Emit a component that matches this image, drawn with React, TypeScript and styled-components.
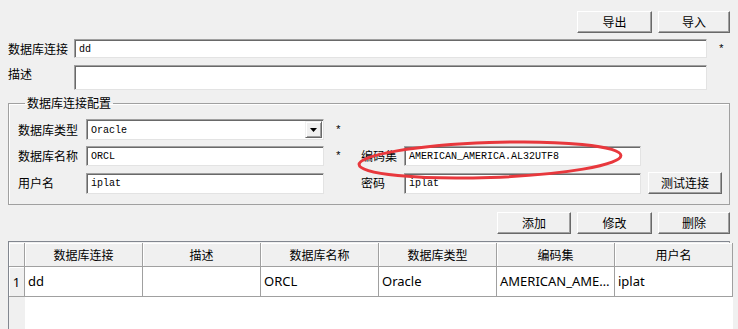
import { Fragment } from "react";
import styled, { createGlobalStyle } from "styled-components";

const GlobalStyle = createGlobalStyle`
  html, body {
    margin: 0;
    padding: 0;
    background: #f0f0f0;
    overflow: hidden;
  }
  body {
    font-family: "Noto Sans CJK SC", "Liberation Sans", sans-serif;
    font-size: 12px;
    color: #000;
  }
`;

const columns = ["数据库连接", "描述", "数据库名称", "数据库类型", "编码集", "用户名"];
const rows = [["dd", "", "ORCL", "Oracle", "AMERICAN_AME…", "iplat"]];

export default function App() {
  return (
    <>
      <GlobalStyle />
      <Page>
        <ButtonBar>
          <Button $width={75}>导出</Button>
          <Button $width={72}>导入</Button>
        </ButtonBar>

        <FormGrid>
          <Label>数据库连接</Label>
          <TextBox $height={19}>dd</TextBox>
          <Star>*</Star>
          <Label $top>描述</Label>
          <TextBox $height={25} />
          <span />
        </FormGrid>

        <GroupBox>
          <Legend>数据库连接配置</Legend>
          <GroupGrid>
            <Label>数据库类型</Label>
            <Select>
              <span>Oracle</span>
              <ArrowButton>
                <svg width="7" height="4" viewBox="0 0 7 4">
                  <path d="M0 0h7L3.5 4z" fill="#000" />
                </svg>
              </ArrowButton>
            </Select>
            <Star>*</Star>
            <span />
            <span />
            <span />
            <span />

            <Label>数据库名称</Label>
            <TextBox $height={20}>ORCL</TextBox>
            <Star>*</Star>
            <Label>编码集</Label>
            <TextBox $height={20}>AMERICAN_AMERICA.AL32UTF8</TextBox>
            <span />
            <span />

            <Label>用户名</Label>
            <TextBox $height={21}>iplat</TextBox>
            <span />
            <Label>密码</Label>
            <TextBox $height={21}>iplat</TextBox>
            <span />
            <Button $width={74}>测试连接</Button>
          </GroupGrid>
          <Circle width="270" height="44" viewBox="0 0 270 44">
            <ellipse
              cx="135"
              cy="22"
              rx="131"
              ry="17.5"
              fill="none"
              stroke="#e8383d"
              strokeWidth="3"
              transform="rotate(-2 135 22)"
            />
          </Circle>
        </GroupBox>

        <ButtonBar $top={7}>
          <Button $width={74}>添加</Button>
          <Button $width={75}>修改</Button>
          <Button $width={72}>删除</Button>
        </ButtonBar>

        <Table>
          <HeaderCell />
          {columns.map((c) => (
            <HeaderCell key={c}>{c}</HeaderCell>
          ))}
          {rows.map((r, i) => (
            <Fragment key={i}>
              <RowHead>{i + 1}</RowHead>
              {r.map((v, j) => (
                <Cell key={j}>{v}</Cell>
              ))}
            </Fragment>
          ))}
          <RowHeadFill />
          <BodyFill />
        </Table>
      </Page>
    </>
  );
}

const Page = styled.div`
  width: 738px;
  height: 329px;
  overflow: hidden;
  box-sizing: border-box;
  padding: 11px 8px 0 8px;
  display: flex;
  flex-direction: column;
`;

const ButtonBar = styled.div<{ $top?: number }>`
  display: flex;
  justify-content: flex-end;
  gap: 6px;
  margin-top: ${(p) => p.$top ?? 0}px;
`;

const Button = styled.div<{ $width: number }>`
  width: ${(p) => p.$width}px;
  height: 22px;
  box-sizing: border-box;
  display: flex;
  align-items: center;
  justify-content: center;
  background: #f0f0f0;
  border: 1px solid;
  border-color: #ffffff #696969 #696969 #ffffff;
  box-shadow: inset -1px -1px 0 #a0a0a0;
  font-size: 12px;
  line-height: 1;
  padding-bottom: 1px;
`;

const FormGrid = styled.div`
  display: grid;
  grid-template-columns: 66px 633px 1fr;
  row-gap: 7px;
  margin-top: 6px;
  align-items: center;
`;

const Label = styled.div<{ $top?: boolean }>`
  font-size: 12px;
  line-height: 14px;
  white-space: nowrap;
  align-self: ${(p) => (p.$top ? "start" : "center")};
  padding-top: ${(p) => (p.$top ? "2px" : "0")};
`;

const Star = styled.div`
  font-family: "Liberation Mono", monospace;
  font-size: 11px;
  padding-left: 11px;
  line-height: 14px;
`;

const TextBox = styled.div<{ $height: number }>`
  height: ${(p) => p.$height}px;
  box-sizing: border-box;
  background: #fff;
  border: 1px solid;
  border-color: #a0a0a0 #e3e3e3 #e3e3e3 #a0a0a0;
  box-shadow: inset 1px 1px 0 #696969;
  font-family: "Liberation Mono", monospace;
  font-size: 10px;
  display: flex;
  align-items: center;
  padding: 1px 0 0 4px;
  white-space: nowrap;
  overflow: hidden;
`;

const GroupBox = styled.fieldset`
  position: relative;
  margin: 5px 0 0 0;
  padding: 0 0 10px 9px;
  min-width: 0;
  border: 1px solid #a0a0a0;
  box-shadow: inset 1px 1px 0 #fff;
`;

const Legend = styled.legend`
  font-size: 12px;
  line-height: 16px;
  padding: 0 2px;
  margin-left: 7px;
`;

const GroupGrid = styled.div`
  display: grid;
  grid-template-columns: 68px 238px 37px 43px 237px 7px 74px;
  grid-template-rows: 21px 20px 22px;
  row-gap: 6px;
  margin-top: 8px;
  align-items: center;
`;

const Select = styled.div`
  height: 21px;
  box-sizing: border-box;
  background: #fff;
  border: 1px solid;
  border-color: #a0a0a0 #e3e3e3 #e3e3e3 #a0a0a0;
  box-shadow: inset 1px 1px 0 #696969;
  font-family: "Liberation Mono", monospace;
  font-size: 10px;
  display: flex;
  align-items: center;
  justify-content: space-between;
  padding: 1px 1px 0 4px;
`;

const ArrowButton = styled.div`
  width: 17px;
  height: 17px;
  box-sizing: border-box;
  background: #f0f0f0;
  border: 1px solid;
  border-color: #f0f0f0 #696969 #696969 #f0f0f0;
  box-shadow: inset 1px 1px 0 #fff, inset -1px -1px 0 #a0a0a0;
  display: flex;
  align-items: center;
  justify-content: center;
  margin-top: -1px;
`;

const Circle = styled.svg`
  position: absolute;
  left: 346px;
  top: 27px;
  pointer-events: none;
`;

const Table = styled.div`
  margin-top: 7px;
  height: 120px;
  flex-shrink: 0;
  box-sizing: border-box;
  border: 1px solid #828790;
  border-right-color: #a0a0a0;
  padding: 1px 2px 0 0;
  background: #f0f0f0;
  display: grid;
  grid-template-columns: 16px repeat(6, 118px);
  grid-template-rows: 24px 30px 1fr;
`;

const HeaderCell = styled.div`
  background: #f0f0f0;
  border-right: 1px solid #a0a0a0;
  border-bottom: 1px solid #a0a0a0;
  box-shadow: inset 1px 1px 0 #fff;
  display: flex;
  align-items: center;
  justify-content: center;
  font-size: 12px;
`;

const RowHead = styled.div`
  background: #f0f0f0;
  border-right: 1px solid #a0a0a0;
  border-bottom: 1px solid #a0a0a0;
  box-shadow: inset 1px 1px 0 #fff;
  display: flex;
  align-items: center;
  justify-content: center;
  font-family: "Noto Sans", sans-serif;
  font-size: 13px;
`;

const Cell = styled.div`
  background: #fff;
  border-right: 1px solid #a0a0a0;
  border-bottom: 1px solid #a0a0a0;
  padding-left: 3px;
  font-family: "Noto Sans", sans-serif;
  font-size: 13px;
  line-height: 29px;
  white-space: nowrap;
  overflow: hidden;
  min-width: 0;
`;

const RowHeadFill = styled.div`
  background: #f0f0f0;
`;

const BodyFill = styled.div`
  grid-column: 2 / -1;
  background: #fff;
`;
